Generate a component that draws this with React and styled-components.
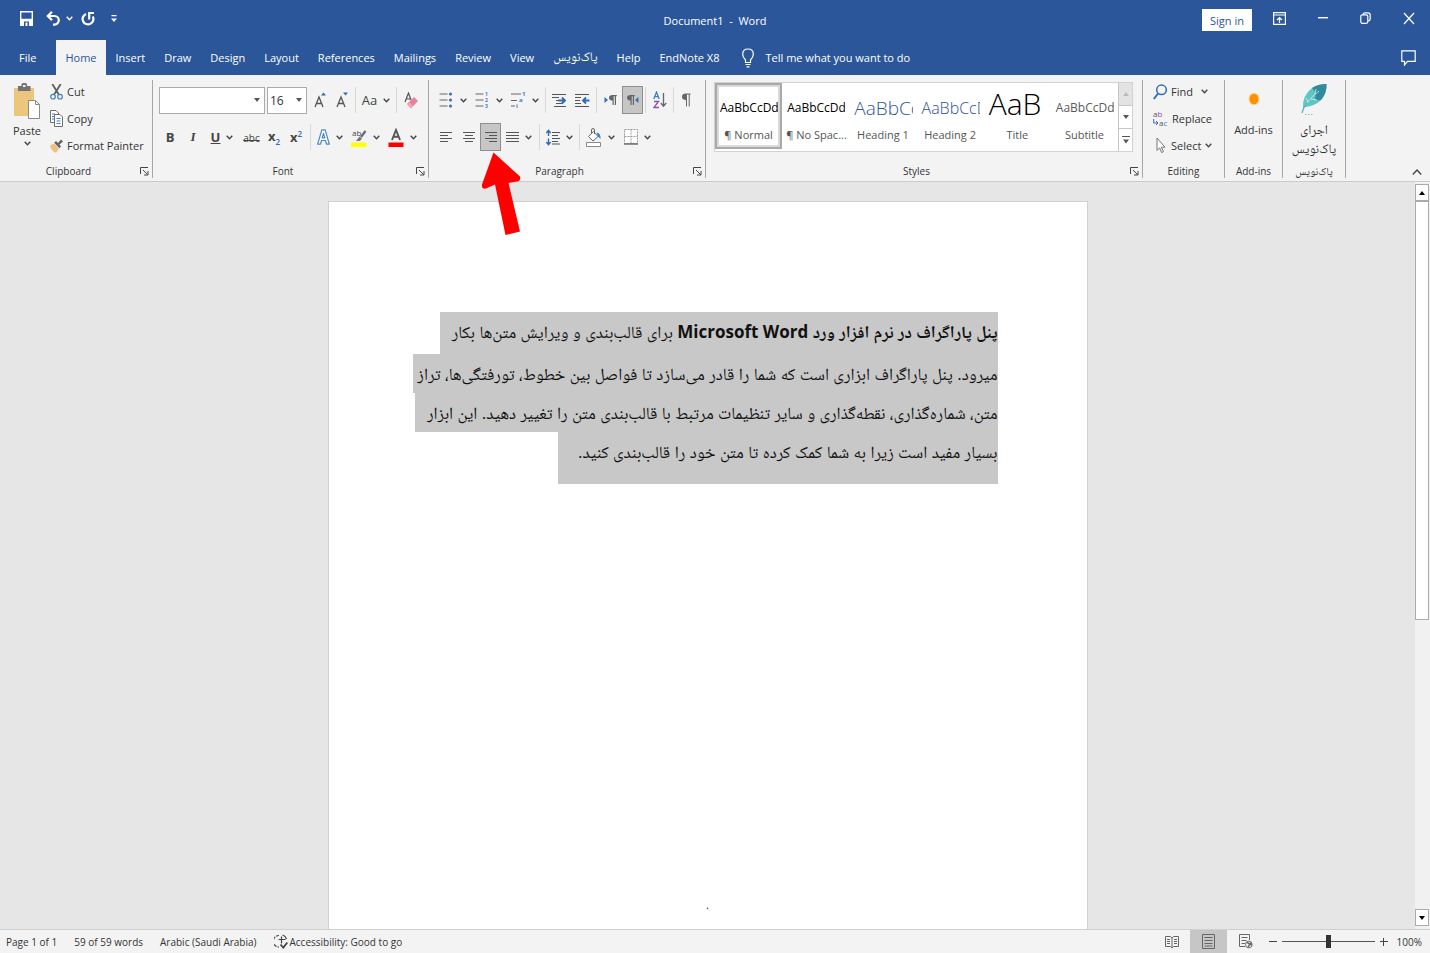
import React, { useState } from 'react';
import styled, { createGlobalStyle } from 'styled-components';

const GlobalStyle = createGlobalStyle`
    * {
        box-sizing: border-box;
    }
    body {
        margin: 0;
        font-family: 'Open Sans', 'Noto Naskh Arabic', 'DejaVu Sans', sans-serif;
        font-size: 11px;
        color: #333333;
    }
    button, input, select {
        font: inherit;
        color: inherit;
    }
    button {
        background: none;
        border: 0;
        padding: 0;
    }
    svg {
        display: block;
        flex: none;
    }
`;

const Window = styled.div`
    display: flex;
    flex-direction: column;
    height: 100vh;
    overflow: hidden;
    background: #e6e6e6;
`;

const TitleBar = styled.header`
    display: grid;
    grid-template-columns: 1fr auto 1fr;
    height: 40px;
    background: #2b579a;
    color: #ffffff;
`;

const QuickAccess = styled.div`
    display: flex;
    align-items: center;
    height: 37px;
    padding-left: 15px;
`;

const QuickButton = styled.button`
    display: flex;
    align-items: center;
    justify-content: center;
    gap: 5px;
    width: ${(props) => props.$w}px;
    height: 24px;
`;

const DocTitle = styled.h1`
    margin: 0;
    font-size: 11px;
    font-weight: normal;
    line-height: 42px;
    white-space: pre;
`;

const WindowTools = styled.div`
    display: flex;
    justify-content: flex-end;
`;

const SignIn = styled.button`
    width: 50px;
    height: 22px;
    margin: 9px 6px 0 0;
    background: #ffffff;
    color: #2b579a;
    font-size: 11px;
`;

const WindowButton = styled.button`
    display: flex;
    align-items: center;
    justify-content: center;
    width: 43px;
    height: 36px;
`;

const TabBar = styled.nav`
    display: flex;
    gap: 1px;
    height: 35px;
    background: #2b579a;
    color: #ffffff;
`;

const Tab = styled.button`
    padding: 0 ${(props) => (props.$file ? 19 : 9)}px;
    background: ${(props) => (props.$active ? '#f3f3f3' : 'transparent')};
    color: ${(props) => (props.$active ? '#2b579a' : '#ffffff')};
    white-space: nowrap;

    &:lang(fa) {
        font-size: 13px;
    }
`;

const TellMe = styled.button`
    display: flex;
    align-items: center;
    gap: 12px;
    margin-left: 12px;
    white-space: nowrap;
`;

const CommentButton = styled(WindowButton)`
    margin-left: auto;
`;

const Ribbon = styled.section`
    display: flex;
    align-items: stretch;
    height: 107px;
    padding: 5px 0 3px;
    background: #f3f3f3;
    border-bottom: 1px solid #cbcbcb;
`;

const GroupBox = styled.div`
    display: flex;
    flex: none;
    flex-direction: column;
    justify-content: space-between;
    width: ${(props) => props.$w}px;
    border-right: 1px solid #a6a6a6;
`;

const GroupFooter = styled.div`
    display: flex;
    align-items: center;
    height: 14px;
    font-size: 10px;

    &:lang(fa) {
        font-size: 11px;
    }
`;

const GroupName = styled.span`
    flex: 1;
    text-align: center;
    line-height: 14px;
`;

const Launcher = styled.button`
    display: flex;
    justify-content: flex-end;
    width: 15px;
    padding-right: 3px;
`;

const ClipboardBody = styled.div`
    display: flex;
    gap: 5px;
    padding-left: 9px;
`;

const PasteButton = styled.button`
    display: flex;
    flex-direction: column;
    align-items: center;
    gap: 3px;
    width: 36px;
    padding-top: 3px;
`;

const CommandList = styled.div`
    display: flex;
    flex-direction: column;
    gap: 4px;
`;

const Command = styled.button`
    display: flex;
    align-items: center;
    gap: 4px;
    height: 23px;
    white-space: nowrap;
`;

const CommandChevron = styled.span`
    padding-left: ${(props) => (props.$wide ? 4 : 0)}px;
`;

const ToolBody = styled.div`
    display: flex;
    flex-direction: column;
    gap: 9px;
    padding: 6px 0 0 6px;
`;

const ToolRow = styled.div`
    display: flex;
    align-items: center;
    height: 28px;
`;

const Tool = styled.button`
    display: flex;
    align-items: center;
    justify-content: center;
    gap: 6px;
    width: ${(props) => props.$w}px;
    height: 28px;
    background: ${(props) => (props.$active ? '#c6c6c6' : 'transparent')};
    border: 1px solid ${(props) => (props.$active ? '#8f8f8f' : 'transparent')};
    color: #444444;
`;

const Letter = styled.span`
    font-size: 13px;
    line-height: 16px;
    font-weight: ${(props) => (props.$bold ? 700 : 400)};
    font-style: ${(props) => (props.$italic ? 'italic' : 'normal')};
    font-family: ${(props) => (props.$italic ? "'Liberation Serif', serif" : 'inherit')};
    text-decoration: ${(props) => props.$line || 'none'};

    sub, sup {
        color: #2b6cb8;
        font-size: 8px;
        font-weight: 600;
        line-height: 8px;
    }
    small {
        font-size: 10px;
    }
`;

const Divider = styled.span`
    width: 1px;
    height: 26px;
    margin: 0 2px;
    background: #d8d8d8;
`;

const ComboBox = styled.label`
    display: flex;
    align-items: center;
    width: ${(props) => props.$w}px;
    height: 27px;
    margin-right: 2px;
    padding-right: 4px;
    background: #ffffff;
    border: 1px solid #ababab;

    input {
        flex: 1;
        width: 0;
        min-width: 0;
        padding: 0 2px;
        border: 0;
        outline: 0;
        background: transparent;
        font-size: 12px;
    }
`;

const Gallery = styled.div`
    display: flex;
    height: 70px;
    margin: 2px 9px 0 8px;
    background: #ffffff;
    border: 1px solid #d2d2d2;
`;

const StyleCard = styled.button`
    flex: 1;
    min-width: 0;
    height: 66px;
    padding: 0 2px;
    overflow: hidden;
    color: #555555;
    border: 2px solid ${(props) => (props.$active ? '#a9a9a9' : 'transparent')};
    box-shadow: ${(props) => (props.$active ? 'inset 0 0 0 2px #dcdad8' : 'none')};
`;

const Sample = styled.span`
    display: block;
    height: 38px;
    padding-left: 1px;
    overflow: hidden;
    line-height: ${(props) => (props.$size > 20 ? 32 : 40)}px;
    text-align: left;
    white-space: nowrap;
    font-size: ${(props) => props.$size}px;
    font-weight: ${(props) => (props.$light ? 300 : 400)};
    color: ${(props) => props.$color};
`;

const CardName = styled.span`
    display: block;
    line-height: 18px;
    white-space: nowrap;
`;

const GalleryScroll = styled.div`
    display: flex;
    flex-direction: column;
    width: 14px;
    border-left: 1px solid #c6c6c6;
`;

const ScrollStep = styled.button`
    display: flex;
    flex: 1;
    align-items: center;
    justify-content: center;
    background: ${(props) => (props.disabled ? '#e3e3e3' : '#ffffff')};

    & + & {
        border-top: 1px solid #c6c6c6;
    }
`;

const EditingBody = styled(CommandList)`
    padding-left: 10px;
`;

const BigButton = styled.button`
    display: flex;
    flex-direction: column;
    align-items: center;
    gap: ${(props) => props.$gap}px;
    padding-top: ${(props) => props.$top}px;
    line-height: 18px;
`;

const PersianCaption = styled.span`
    font-size: 13px;
    line-height: 19px;
`;

const CollapseButton = styled.button`
    align-self: flex-end;
    margin: 0 8px 0 auto;
`;

const Workspace = styled.main`
    display: flex;
    flex: 1;
    min-height: 0;
`;

const Canvas = styled.div`
    display: flex;
    flex: 1;
    justify-content: center;
    padding-top: 19px;
    overflow: hidden;
`;

const Page = styled.article`
    display: flex;
    flex-direction: column;
    justify-content: space-between;
    width: 760px;
    padding: 110px 89px 16px;
    background: #ffffff;
    border: 1px solid #d0d0d0;
    border-bottom: 0;
    color: #111111;
`;

const Paragraph = styled.p`
    margin: 0;
    font-size: 17px;
`;

const Line = styled.span`
    display: block;
    width: fit-content;
    padding-bottom: ${(props) => props.$below || 0}px;
    padding-left: ${(props) => props.$after}px;
    line-height: 39px;
    white-space: nowrap;
    background: #c8c8c8;
`;

const FooterMark = styled.span`
    align-self: center;
    line-height: 16px;
`;

const ScrollBar = styled.div`
    display: flex;
    flex-direction: column;
    width: 15px;
    padding: 2px 1px 3px 0;
    background: #f1f1f1;
`;

const ScrollArrow = styled.button`
    display: flex;
    align-items: center;
    justify-content: center;
    height: 17px;
    background: #ffffff;
    border: 1px solid #ababab;
`;

const ScrollThumb = styled.div`
    flex: 59;
    background: #ffffff;
    border: 1px solid #ababab;
`;

const ScrollTrack = styled.div`
    flex: 41;
`;

const StatusBar = styled.footer`
    display: flex;
    align-items: center;
    height: 24px;
    padding: 0 8px 0 6px;
    background: #f3f3f3;
    border-top: 1px solid #cfcfcf;
    font-size: 10px;
    white-space: nowrap;
`;

const StatusItem = styled.button`
    display: flex;
    align-items: center;
    gap: 2px;
    margin-right: 17px;
`;

const StatusSpacer = styled.span`
    flex: 1;
`;

const ViewButton = styled.button`
    display: flex;
    align-items: center;
    justify-content: center;
    align-self: stretch;
    width: 37px;
    background: ${(props) => (props.$active ? '#c6c6c6' : 'transparent')};
`;

const ZoomStep = styled.button`
    display: flex;
    justify-content: center;
    width: 18px;
`;

const ZoomSlider = styled.input`
    appearance: none;
    width: 93px;
    height: 14px;
    margin: 0;
    background: linear-gradient(#555555, #555555) center / 100% 1px no-repeat;

    &::-webkit-slider-thumb {
        appearance: none;
        width: 5px;
        height: 13px;
        background: #333333;
    }
`;

const ZoomValue = styled.button`
    width: 28px;
    margin-left: 1px;
    text-align: right;
`;

const ArrowAnchor = styled.div`
    position: relative;
`;

const PointerArrow = styled.svg`
    position: absolute;
    top: 29px;
    left: 1px;
    z-index: 2;
`;

const Chevron = ({ color = '#444444' }) => (
    <svg width="7" height="5" viewBox="0 0 7 5" fill="none" stroke={color} strokeWidth="1.4">
        <path d="M.7.8 3.5 3.7 6.3.8" />
    </svg>
);

const Caret = ({ up, color = '#555555' }) => (
    <svg width="6" height="4" viewBox="0 0 6 4" fill={color}>
        <path d={up ? 'M0 4h6L3 0z' : 'M0 0h6L3 4z'} />
    </svg>
);

const Rows = ({ rows, w = 14, h = 12 }) => (
    <svg width={w} height={h} viewBox={`0 0 ${w} ${h}`} stroke="#555555" strokeWidth="1">
        {rows.map(([from, to], i) => (
            <path key={i} d={`M${from} ${i * 3 + 1.5}H${to}`} />
        ))}
    </svg>
);

const SaveIcon = () => (
    <svg width="13" height="15" viewBox="0 0 13 15" fill="none" stroke="#fff" strokeWidth="1.4">
        <path d="M.7.7h11.6v13.6H.7z" />
        <path d="M1 8.4h11v6H1z" fill="#fff" />
        <path d="M4 10.5h5V15H4z" fill="#2b579a" stroke="none" />
        <path d="M5.5 11.5h2V15h-2z" fill="#fff" stroke="none" />
    </svg>
);

const UndoIcon = () => (
    <svg width="15" height="15" viewBox="0 0 15 15" fill="none" stroke="#fff" strokeWidth="2.2">
        <path d="M2 5h6.5a4.2 4.2 0 0 1 0 8.6H7" />
        <path d="M6 .8 1.8 5 6 9.2" />
    </svg>
);

const RedoIcon = () => (
    <svg width="15" height="16" viewBox="0 0 15 16" fill="none" stroke="#fff" strokeWidth="2.2">
        <path d="M5 3A5.400 5.400 0 1 0 11.800 5.500" />
        <path d="M8.200 8.500V2H13" />
    </svg>
);

const LaunchIcon = () => (
    <svg width="9" height="9" viewBox="0 0 9 9" fill="none" stroke="#444">
        <path d="M.5 7V.5H8M3 3l4.5 4.5M8 4v4H4" />
    </svg>
);

const PasteIcon = () => (
    <svg width="26" height="37" viewBox="0 0 26 37">
        <path d="M0 5h20v28H0z" fill="#ecc67c" />
        <path d="M4 3h3.500V1.500Q7.500 0 9 0h2.500Q13 0 13 1.500V3h3.500v5H4z" fill="#737373" />
        <path d="M9 2h2.500v2H9z" fill="#f3f3f3" />
        <path d="M14.500 17.500h7l4 4v14h-11z" fill="#fff" stroke="#8a8a8a" />
        <path d="M21.500 17.500v4h4" fill="none" stroke="#8a8a8a" />
    </svg>
);

const CutIcon = () => (
    <svg width="13" height="16" viewBox="0 0 13 16" fill="none">
        <path d="M2.300 0 8.800 10.500M10.700 0 4.200 10.500" stroke="#5f5f5f" strokeWidth="1.800" />
        <circle cx="3" cy="12.700" r="2.300" stroke="#3f7fc4" strokeWidth="1.200" />
        <circle cx="10" cy="12.700" r="2.300" stroke="#3f7fc4" strokeWidth="1.200" />
    </svg>
);

const CopyIcon = () => (
    <svg width="13" height="17" viewBox="0 0 13 17" fill="#fff" stroke="#6e6e6e">
        <path d="M.5.5H6L8.500 3v9.500h-8z" />
        <path d="M2 4h3M2 6.500h3M2 9h3" stroke="#3f7fc4" />
        <path d="M4.500 4.500H10L12.500 7v9.500h-8z" />
        <path d="M6.500 8.500h4M6.500 11h4M6.500 13.500h4" stroke="#3f7fc4" />
    </svg>
);

const PainterIcon = () => (
    <svg width="13" height="14" viewBox="0 0 13 14">
        <path d="M0 6.500 4 4.500l5 5L6 14Q1 12 0 6.500z" fill="#ecc080" />
        <path d="M4.200 3.800 6 2l2 2 3-3.500 2 2L9.500 5.500l1.500 2-1.500 1.800z" fill="#636363" />
    </svg>
);

const SizeIcon = ({ grow }) => (
    <svg width="13" height="16" viewBox="0 0 13 16" fill="none" stroke="#555" strokeWidth="1.300">
        <path d="M1 15 5 5l4 10M2.500 11.500h5" />
        <path d={grow ? 'M7 3.500h5L9.500.5z' : 'M7 .5h5L9.500 3.500z'} fill="#2b6cb8" stroke="none" />
    </svg>
);

const ClearIcon = () => (
    <svg width="15" height="17" viewBox="0 0 15 17" fill="none">
        <path d="M1 10 4.500 1 7 8M2.200 7h4" stroke="#555" strokeWidth="1.200" />
        <path d="m3 12 7-7 4 4-7 7.500z" fill="#e8829a" />
        <path d="m3 12 2-2 4 4-2 2.500z" fill="#f0a6b6" />
    </svg>
);

const OutlineAIcon = () => (
    <svg width="13" height="16" viewBox="0 0 13 16" fill="#fff" stroke="#4a86c8" strokeWidth="1.200" strokeLinejoin="round">
        <path d="M4.800.8h3.400l4.100 14.400H9.500l-1-3.700h-4l-1 3.700H.7z" />
        <path d="M6.500 4.300 5.200 8.800h2.600z" />
    </svg>
);

const HighlightIcon = () => (
    <svg width="16" height="21" viewBox="0 0 16 21">
        <text x="1" y="9" fontSize="8" fill="#444">ab</text>
        <path d="m14.500 4-4.500 6" stroke="#666" strokeWidth="2.200" />
        <path d="m5 14 3.500-4.500 2.500 2-2 2.500z" fill="#777" />
        <path d="M0 15.500h15.500V20H0z" fill="#ffff00" />
    </svg>
);

const FontColorIcon = () => (
    <svg width="16" height="19" viewBox="0 0 16 19">
        <path d="M4 12 8 2l4 10M5.500 8.700h5" fill="none" stroke="#555" strokeWidth="1.900" />
        <path d="M.5 14.500h15V19H.5z" fill="#ff0000" />
    </svg>
);

const ListIcon = ({ marks }) => (
    <svg width="15" height="20" viewBox="0 0 15 20">
        <path d="M.5 4h8M.5 10h8M.5 16h8" stroke="#666" />
        {marks
            ? marks.map((m, i) => (
                  <text key={m} x="10" y={i * 6 + 6} fontSize="5" fontWeight="700" fill="#3f7fc4">
                      {m}
                  </text>
              ))
            : [4, 10, 16].map((y) => <circle key={y} cx="11.500" cy={y} r="1.600" fill="#3f6fb5" />)}
    </svg>
);

const MultiListIcon = () => (
    <svg width="15" height="20" viewBox="0 0 15 20">
        <path d="M0 4h10M0 10.500h6M0 16h4" stroke="#666" />
        <g fontSize="6" fontWeight="700" fill="#3f7fc4">
            <text x="11" y="6">1</text>
            <text x="8" y="12">a</text>
            <text x="5" y="18">i</text>
        </g>
    </svg>
);

const IndentIcon = ({ back }) => (
    <svg width="15" height="15" viewBox="0 0 15 15" fill="none">
        <path
            d={back ? 'M0 1.500h14M0 4.500h6M0 7.500h5M0 10.500h6M0 13.500h14' : 'M0 1.500h14M0 4.500h7M4 7.500h3M4 10.500h6M2 13.500h12'}
            stroke="#555"
        />
        <path d={back ? 'M14.500 7.500H8.500M11 4.500 8 7.500l3 3' : 'M6.500 7.500H13M10 4.500l3 3-3 3'} stroke="#2b6cb8" strokeWidth="1.800" />
    </svg>
);

const Pilcrow = ({ w = 10 }) => (
    <svg width={w} height={w + 4} viewBox="0 0 10 14">
        <path d="M9.500.5V1.500H8.700V13.500H7.700V1.500H6V13.500H5V7Q1 7 1 3.800 1 .5 5 .5z" fill="#666" />
    </svg>
);

const DirectionIcon = ({ rtl }) => (
    <svg width="13" height="12" viewBox="0 0 13 12">
        <path d={rtl ? 'M12.500 3v6L9 6z' : 'M.5 3v6L4 6z'} fill="#3470b8" />
        <path
            transform={rtl ? 'translate(-4 0)' : undefined}
            d="M12.800 1v1.200h-.800V11h-1.200V2.200H9.700V11H8.500V6.500Q5 6.500 5 3.700 5 1 8.500 1z"
            fill="#666"
        />
    </svg>
);

const SortIcon = () => (
    <svg width="14" height="18" viewBox="0 0 14 18" fill="none" strokeWidth="1.300">
        <path d="M.8 8 3.500 1l2.700 7M1.800 5.700h3.400" stroke="#3f7fc4" />
        <path d="M1 10.500h4.500L1 16.500h5" stroke="#8e4fae" />
        <path d="M10.500 2v13M7.800 12l2.700 3.200L13.200 12" stroke="#666" />
    </svg>
);

const SpacingIcon = () => (
    <svg width="14" height="17" viewBox="0 0 14 17" fill="none">
        <path d="M6 3.500h8M6 6.500h6M6 9.500h8M6 12.500h6M6 15h8" stroke="#555" />
        <path d="M2.500 1.500v5.500M.3 4l2.200-2.600L4.700 4M2.500 9.500V15M.3 13l2.200 2.600L4.700 13" stroke="#2b6cb8" strokeWidth="1.400" />
    </svg>
);

const ShadingIcon = () => (
    <svg width="16" height="19" viewBox="0 0 16 19" fill="none">
        <path d="m2.500 8.500 5-5 4.500 5-5 4.500z" fill="#fff" stroke="#666" />
        <path d="M5.500 6V2Q5.500.5 7 .5T8.500 2v4" stroke="#666" />
        <path d="M10.500 4.500Q15 5 14.500 11L12 8.500z" fill="#3f7fc4" />
        <path d="M.5 14.500h14v4H.5z" fill="#fff" stroke="#888" />
    </svg>
);

const BordersIcon = () => (
    <svg width="14" height="16" viewBox="0 0 14 16" fill="none" stroke="#9a9a9a">
        <path d="M.5.5h13v14H.5zM7 .5v14M.5 7.500h13" strokeDasharray="2 1" fill="#fff" />
        <path d="M0 15h14" stroke="#666" strokeWidth="1.400" />
    </svg>
);

const FindIcon = () => (
    <svg width="14" height="16" viewBox="0 0 14 16" fill="none" stroke="#2f6db5">
        <circle cx="8.500" cy="5.800" r="4.800" strokeWidth="1.500" />
        <path d="M5 9.500.8 15" strokeWidth="2" />
    </svg>
);

const ReplaceIcon = () => (
    <svg width="15" height="20" viewBox="0 0 15 20" fontSize="8">
        <text x="0" y="8" fill="#555">a<tspan fill="#8e4fae">b</tspan></text>
        <text x="6" y="17" fill="#555">a<tspan fill="#3f7fc4">c</tspan></text>
        <path d="M.7 10v4h4M3 12l2 2-2 2" fill="none" stroke="#3470b8" />
    </svg>
);

const SelectIcon = () => (
    <svg width="14" height="17" viewBox="0 0 14 17" fill="#fff" stroke="#777">
        <path d="M4 1v12.500l2.600-2.700 2 4.700 1.800-.8-2-4.500H12z" />
    </svg>
);

const AddinDot = () => (
    <svg width="12" height="14" viewBox="0 0 12 14">
        <ellipse cx="6" cy="7" rx="5.500" ry="6.300" fill="#ffd79c" />
        <ellipse cx="6" cy="7" rx="4.500" ry="5.300" fill="#ff9000" />
    </svg>
);

const FeatherIcon = () => (
    <svg width="28" height="33" viewBox="0 0 28 33">
        <path d="M3 25Q2 13 12 5 18 1 26.500 1 27 10 21 17 15 23 5 24z" fill="#5fc4c4" />
        <path d="M12 5Q18 1 26.500 1 27 10 21 17q-3 1-6-1 2-6-3-11z" fill="#318a9e" />
        <path d="M2 29Q5 19 19 8M8 19l-2-4M11 16l6 1M15 11l1-5" fill="none" stroke="#d9f3f1" strokeWidth=".8" />
        <path d="M2 30Q3 25 7 20" fill="none" stroke="#43aeb4" strokeWidth="1.200" />
        <path d="M5 31.500h1.500M8 31.500h1.500M11 31.500h1.500" stroke="#7acccc" />
    </svg>
);

const BulbIcon = () => (
    <svg width="12" height="20" viewBox="0 0 12 20" fill="none" stroke="#fff" strokeWidth="1.200">
        <path d="M3.500 14.500V12Q.7 9 .7 6.200.7 1 6 1t5.300 5.200Q11.300 9 8.500 12v2.500zM3.500 16.500h5M4.500 18.800h3" />
    </svg>
);

const RibbonOptionsIcon = () => (
    <svg width="13" height="13" viewBox="0 0 13 13" fill="none" stroke="#fff" strokeWidth="1.200">
        <path d="M.6.6h11.800v11.800H.6zM.6 3h11.800M6.500 11V5.500M4 8l2.500-2.500L9 8" />
    </svg>
);

const RestoreIcon = () => (
    <svg width="11" height="12" viewBox="0 0 11 12" fill="none" stroke="#fff" strokeWidth="1.200">
        <rect x=".8" y="2.800" width="7" height="8.500" rx="1.500" />
        <path d="M3 2.600Q3.200.8 5 .8h3q2.200 0 2.200 2.200v4q0 1.800-2 2.200" />
    </svg>
);

const CloseIcon = () => (
    <svg width="12" height="13" viewBox="0 0 12 13" stroke="#fff" strokeWidth="1.200">
        <path d="m1 1 10 11M11 1 1 12" />
    </svg>
);

const CommentIcon = () => (
    <svg width="15" height="16" viewBox="0 0 15 16" fill="none" stroke="#fff" strokeWidth="1.200">
        <path d="M.8.800h13.400v10.500H6.500L3.500 15v-3.700H.8z" />
    </svg>
);

const AccessIcon = () => (
    <svg width="14" height="15" viewBox="0 0 14 15" fill="none" stroke="#444" strokeWidth="1.200">
        <path d="M5 1.500A5.500 5.500 0 0 0 5 13" strokeDasharray="3 1" />
        <path d="M7.500 2.500V6M4.500 5.500h7M7.500 5.500v4M8.500 1A6 6 0 0 1 12.500 5" />
        <path d="m6.500 10.500 2.800 3 4-5" strokeWidth="1.800" />
    </svg>
);

const ReadIcon = () => (
    <svg width="14" height="14" viewBox="0 0 14 14" fill="none" stroke="#666">
        <path d="M.5 1.500h5L7 3l1.500-1.500h5v10h-5L7 13l-1.500-1.500h-5zM7 3v10M2 4.500h3M2 6.500h3M2 8.500h3M9 4.500h3M9 6.500h3M9 8.500h3" />
    </svg>
);

const PrintIcon = () => (
    <svg width="13" height="15" viewBox="0 0 13 15" fill="none" stroke="#666">
        <path d="M.5.5h12v14H.5zM2.500 3.500h8M2.500 6.500h8M2.500 9.500h8M2.500 12h8" />
    </svg>
);

const WebIcon = () => (
    <svg width="14" height="15" viewBox="0 0 14 15" fill="none" stroke="#666">
        <path d="M6 12.500H.5V.5h10V6M2.500 3.500h6M2.500 6.500h5M2.500 9.500H6" />
        <circle cx="9.800" cy="10.500" r="3.300" fill="#fff" />
        <path d="M8 8.500 11 10l-2 3M11.500 8.500l1 3" strokeWidth="1.400" />
    </svg>
);

const tabs = ['File', 'Home', 'Insert', 'Draw', 'Design', 'Layout', 'References', 'Mailings', 'Review', 'View', 'پاک‌نویس', 'Help', 'EndNote X8'];

const styleCards = [
    { name: '¶ Normal', text: 'AaBbCcDd', size: 12, color: '#000000' },
    { name: '¶ No Spac...', text: 'AaBbCcDd', size: 12, color: '#000000' },
    { name: 'Heading 1', text: 'AaBbCc', size: 19, color: '#2f5496', light: true },
    { name: 'Heading 2', text: 'AaBbCcD', size: 16, color: '#2f5496', light: true },
    { name: 'Title', text: 'AaB', size: 30, color: '#000000', light: true },
    { name: 'Subtitle', text: 'AaBbCcDd', size: 12, color: '#5a5a5a' },
];

function Group({ name, width, launcher, lang, children }) {
    return (
        <GroupBox $w={width}>
            {children}
            <GroupFooter lang={lang}>
                <GroupName>{name}</GroupName>
                {launcher && (
                    <Launcher aria-label={`${name} settings`}>
                        <LaunchIcon />
                    </Launcher>
                )}
            </GroupFooter>
        </GroupBox>
    );
}

function FontGroup() {
    const [size, setSize] = useState('16');
    return (
        <Group name="Font" width={276} launcher>
            <ToolBody>
                <ToolRow>
                    <ComboBox $w={106}>
                        <input aria-label="Font" defaultValue="" />
                        <Caret />
                    </ComboBox>
                    <ComboBox $w={40}>
                        <input aria-label="Font size" value={size} onChange={(e) => setSize(e.target.value)} />
                        <Caret />
                    </ComboBox>
                    <Tool $w={23} aria-label="Grow font"><SizeIcon grow /></Tool>
                    <Tool $w={21} aria-label="Shrink font"><SizeIcon /></Tool>
                    <Divider />
                    <Tool $w={36} aria-label="Change case"><Letter>Aa</Letter><Chevron /></Tool>
                    <Divider />
                    <Tool $w={24} aria-label="Clear formatting"><ClearIcon /></Tool>
                </ToolRow>
                <ToolRow>
                    <Tool $w={22}><Letter $bold>B</Letter></Tool>
                    <Tool $w={24}><Letter $bold $italic>I</Letter></Tool>
                    <Tool $w={34} aria-label="Underline"><Letter $bold $line="underline">U</Letter><Chevron /></Tool>
                    <Tool $w={25}><Letter $line="line-through"><small>abc</small></Letter></Tool>
                    <Tool $w={20}><Letter $bold>x<sub>2</sub></Letter></Tool>
                    <Tool $w={24}><Letter $bold>x<sup>2</sup></Letter></Tool>
                    <Divider />
                    <Tool $w={34} aria-label="Text effects"><OutlineAIcon /><Chevron /></Tool>
                    <Tool $w={37} aria-label="Highlight colour"><HighlightIcon /><Chevron /></Tool>
                    <Tool $w={37} aria-label="Font colour"><FontColorIcon /><Chevron /></Tool>
                </ToolRow>
            </ToolBody>
        </Group>
    );
}

function ParagraphGroup() {
    return (
        <Group name="Paragraph" width={277} launcher>
            <ToolBody>
                <ToolRow>
                    <Tool $w={36} aria-label="Bullets"><ListIcon /><Chevron /></Tool>
                    <Tool $w={36} aria-label="Numbering"><ListIcon marks={['1', '2', '3']} /><Chevron /></Tool>
                    <Tool $w={36} aria-label="Multilevel list"><MultiListIcon /><Chevron /></Tool>
                    <Divider />
                    <Tool $w={23} aria-label="Increase indent"><IndentIcon /></Tool>
                    <Tool $w={23} aria-label="Decrease indent"><IndentIcon back /></Tool>
                    <Divider />
                    <Tool $w={23} aria-label="Left to right"><DirectionIcon /></Tool>
                    <Tool $w={21} $active aria-label="Right to left"><DirectionIcon rtl /></Tool>
                    <Divider />
                    <Tool $w={23} aria-label="Sort"><SortIcon /></Tool>
                    <Divider />
                    <Tool $w={20} aria-label="Show marks"><Pilcrow /></Tool>
                </ToolRow>
                <ToolRow>
                    <Tool $w={22} aria-label="Align left"><Rows rows={[[0, 12], [0, 8], [0, 12], [0, 8]]} w={12} h={13} /></Tool>
                    <Tool $w={23} aria-label="Center"><Rows rows={[[0, 12], [2, 10], [0, 12], [2, 10]]} w={12} h={13} /></Tool>
                    <ArrowAnchor>
                        <Tool $w={21} $active aria-label="Align right"><Rows rows={[[0, 12], [4, 12], [0, 12], [4, 12]]} w={12} h={13} /></Tool>
                        <PointerArrow width="40" height="84" viewBox="0 0 40 84" fill="#ff0000">
                            <path d="M12.500.5 39 24.500Q40 29 36 29.500L27.500 31 39 79.500 24.500 83 14 32.500 5 36.500Q.5 37.500 1 32.500z" />
                        </PointerArrow>
                    </ArrowAnchor>
                    <Tool $w={36} aria-label="Justify"><Rows rows={[[0, 13], [0, 13], [0, 13], [0, 13]]} w={13} h={13} /><Chevron /></Tool>
                    <Divider />
                    <Tool $w={35} aria-label="Line spacing"><SpacingIcon /><Chevron /></Tool>
                    <Divider />
                    <Tool $w={37} aria-label="Shading"><ShadingIcon /><Chevron /></Tool>
                    <Tool $w={37} aria-label="Borders"><BordersIcon /><Chevron /></Tool>
                </ToolRow>
            </ToolBody>
        </Group>
    );
}

export default function App() {
    const [zoom, setZoom] = useState(50);
    return (
        <Window>
            <GlobalStyle />
            <TitleBar>
                <QuickAccess>
                    <QuickButton $w={23} aria-label="Save"><SaveIcon /></QuickButton>
                    <QuickButton $w={42} aria-label="Undo"><UndoIcon /><Chevron color="#fff" /></QuickButton>
                    <QuickButton $w={17} aria-label="Redo"><RedoIcon /></QuickButton>
                    <QuickButton $w={34} aria-label="Customize">
                        <svg width="6" height="8" viewBox="0 0 6 8" fill="#fff">
                            <path d="M.5 0h5v1.200h-5zM0 3.500h6L3 7z" />
                        </svg>
                    </QuickButton>
                </QuickAccess>
                <DocTitle>Document1  -  Word</DocTitle>
                <WindowTools>
                    <SignIn>Sign in</SignIn>
                    <WindowButton aria-label="Ribbon display options"><RibbonOptionsIcon /></WindowButton>
                    <WindowButton aria-label="Minimize">
                        <svg width="10" height="2" viewBox="0 0 10 2"><path d="M0 0h10v1.400H0z" fill="#fff" /></svg>
                    </WindowButton>
                    <WindowButton aria-label="Restore"><RestoreIcon /></WindowButton>
                    <WindowButton aria-label="Close"><CloseIcon /></WindowButton>
                </WindowTools>
            </TitleBar>
            <TabBar>
                {tabs.map((t) => (
                    <Tab key={t} $file={t === 'File'} $active={t === 'Home'} lang={t === 'پاک‌نویس' ? 'fa' : undefined}>
                        {t}
                    </Tab>
                ))}
                <TellMe><BulbIcon />Tell me what you want to do</TellMe>
                <CommentButton aria-label="Comments"><CommentIcon /></CommentButton>
            </TabBar>
            <Ribbon>
                <Group name="Clipboard" width={153} launcher>
                    <ClipboardBody>
                        <PasteButton><PasteIcon />Paste<Chevron /></PasteButton>
                        <CommandList>
                            <Command><CutIcon />Cut</Command>
                            <Command><CopyIcon />Copy</Command>
                            <Command><PainterIcon />Format Painter</Command>
                        </CommandList>
                    </ClipboardBody>
                </Group>
                <FontGroup />
                <ParagraphGroup />
                <Group name="Styles" width={437} launcher>
                    <Gallery>
                        {styleCards.map((s, i) => (
                            <StyleCard key={s.name} $active={i === 0}>
                                <Sample $size={s.size} $color={s.color} $light={s.light}>{s.text}</Sample>
                                <CardName>{s.name}</CardName>
                            </StyleCard>
                        ))}
                        <GalleryScroll>
                            <ScrollStep disabled aria-label="Previous styles"><Caret up color="#bbbbbb" /></ScrollStep>
                            <ScrollStep aria-label="Next styles"><Caret /></ScrollStep>
                            <ScrollStep aria-label="All styles">
                                <svg width="8" height="8" viewBox="0 0 8 8" fill="#555"><path d="M0 0h8v1H0zM1 3.500h6L4 7.500z" /></svg>
                            </ScrollStep>
                        </GalleryScroll>
                    </Gallery>
                </Group>
                <Group name="Editing" width={82}>
                    <EditingBody>
                        <Command><FindIcon />Find<CommandChevron $wide><Chevron /></CommandChevron></Command>
                        <Command><ReplaceIcon />Replace</Command>
                        <Command><SelectIcon />Select<Chevron /></Command>
                    </EditingBody>
                </Group>
                <Group name="Add-ins" width={58}>
                    <BigButton $top={12} $gap={15}><AddinDot />Add-ins</BigButton>
                </Group>
                <Group name="پاک‌نویس" width={63} lang="fa">
                    <BigButton $top={3} $gap={4}>
                        <FeatherIcon />
                        <PersianCaption>اجرای<br />پاک‌نویس</PersianCaption>
                    </BigButton>
                </Group>
                <CollapseButton aria-label="Collapse the ribbon">
                    <svg width="10" height="9" viewBox="0 0 10 9" fill="none" stroke="#444" strokeWidth="1.300"><path d="m.8 5.500 4.200-4.500 4.200 4.500" /></svg>
                </CollapseButton>
            </Ribbon>
            <Workspace>
                <Canvas>
                    <Page>
                        <Paragraph dir="rtl" lang="fa">
                            <Line $after={12} $below={3}>
                                <b>پنل پاراگراف در نرم افزار ورد Microsoft Word</b> برای قالب‌بندی و ویرایش متن‌ها بکار
                            </Line>
                            <Line $after={4}>میرود. پنل پاراگراف ابزاری است که شما را قادر می‌سازد تا فواصل بین خطوط، تورفتگی‌ها، تراز</Line>
                            <Line $after={12}>متن، شماره‌گذاری، نقطه‌گذاری و سایر تنظیمات مرتبط با قالب‌بندی متن را تغییر دهید. این ابزار</Line>
                            <Line $after={20} $below={13}>بسیار مفید است زیرا به شما کمک کرده تا متن خود را قالب‌بندی کنید.</Line>
                        </Paragraph>
                        <FooterMark>.</FooterMark>
                    </Page>
                </Canvas>
                <ScrollBar>
                    <ScrollArrow aria-label="Scroll up"><Caret up color="#000000" /></ScrollArrow>
                    <ScrollThumb />
                    <ScrollTrack />
                    <ScrollArrow aria-label="Scroll down"><Caret color="#000000" /></ScrollArrow>
                </ScrollBar>
            </Workspace>
            <StatusBar>
                <StatusItem>Page 1 of 1</StatusItem>
                <StatusItem>59 of 59 words</StatusItem>
                <StatusItem>Arabic (Saudi Arabia)</StatusItem>
                <StatusItem><AccessIcon />Accessibility: Good to go</StatusItem>
                <StatusSpacer />
                <ViewButton aria-label="Read mode"><ReadIcon /></ViewButton>
                <ViewButton $active aria-label="Print layout"><PrintIcon /></ViewButton>
                <ViewButton aria-label="Web layout"><WebIcon /></ViewButton>
                <ZoomStep aria-label="Zoom out">
                    <svg width="8" height="8" viewBox="0 0 8 8" stroke="#444"><path d="M0 3.500h8" /></svg>
                </ZoomStep>
                <ZoomSlider type="range" aria-label="Zoom" value={zoom} onChange={(e) => setZoom(Number(e.target.value))} />
                <ZoomStep aria-label="Zoom in">
                    <svg width="8" height="8" viewBox="0 0 8 8" stroke="#444"><path d="M0 3.500h8M3.500 0v8" /></svg>
                </ZoomStep>
                <ZoomValue>100%</ZoomValue>
            </StatusBar>
        </Window>
    );
}
